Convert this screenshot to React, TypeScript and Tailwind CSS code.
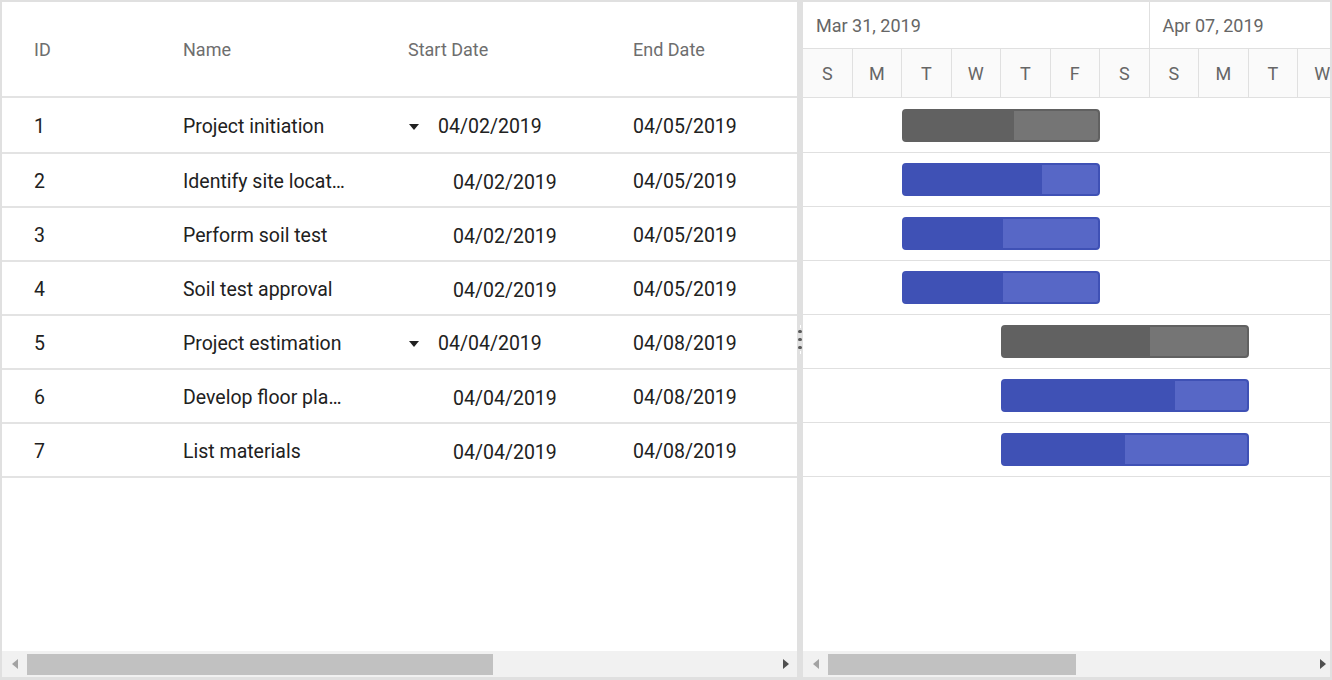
import React from "react";

type Row = {
  id: number;
  name: string;
  start: string;
  end: string;
  parent: boolean;
  offset: number;
  width: number;
  prog: number;
};

const rows: Row[] = [
  { id: 1, name: "Project initiation", start: "04/02/2019", end: "04/05/2019", parent: true, offset: 99, width: 198, prog: 112 },
  { id: 2, name: "Identify site location", start: "04/02/2019", end: "04/05/2019", parent: false, offset: 99, width: 198, prog: 140 },
  { id: 3, name: "Perform soil test", start: "04/02/2019", end: "04/05/2019", parent: false, offset: 99, width: 198, prog: 101 },
  { id: 4, name: "Soil test approval", start: "04/02/2019", end: "04/05/2019", parent: false, offset: 99, width: 198, prog: 101 },
  { id: 5, name: "Project estimation", start: "04/04/2019", end: "04/08/2019", parent: true, offset: 198, width: 247.5, prog: 149 },
  { id: 6, name: "Develop floor plan for estimation", start: "04/04/2019", end: "04/08/2019", parent: false, offset: 198, width: 247.5, prog: 174 },
  { id: 7, name: "List materials", start: "04/04/2019", end: "04/08/2019", parent: false, offset: 198, width: 247.5, prog: 124 },
];

const days = ["S", "M", "T", "W", "T", "F", "S", "S", "M", "T", "W", "T"];

function LeftTri({ dark }: { dark?: boolean }) {
  return (
    <div
      className={
        "w-0 h-0 border-y-[5.5px] border-y-transparent border-r-[6px] " +
        (dark ? "border-r-[#505050]" : "border-r-[#a3a3a3]")
      }
    />
  );
}
function RightTri({ dark }: { dark?: boolean }) {
  return (
    <div
      className={
        "w-0 h-0 border-y-[5.5px] border-y-transparent border-l-[6px] " +
        (dark ? "border-l-[#505050]" : "border-l-[#a3a3a3]")
      }
    />
  );
}

export default function App() {
  return (
    <div
      className="w-[1332px] h-[680px] bg-white border-t-2 border-x-2 border-b-[3px] border-[#e0e0e0] flex overflow-hidden"
      style={{ fontFamily: "Roboto, 'Liberation Sans', sans-serif" }}
    >
      {/* Grid pane */}
      <div className="w-[795px] h-full flex flex-col overflow-hidden shrink-0">
        <div className="h-[96px] border-b-2 border-[#e3e3e3] flex items-center text-[18px] font-normal text-[#6e6e6e] shrink-0">
          <div className="w-[148px] pl-[32px] shrink-0">ID</div>
          <div className="w-[225px] pl-[33px] shrink-0">Name</div>
          <div className="w-[225px] pl-[33px] shrink-0">Start Date</div>
          <div className="w-[225px] pl-[33px] shrink-0">End Date</div>
        </div>
        {rows.map((r, i) => (
          <div
            key={r.id}
            className={
              "border-b-2 border-[#e3e3e3] flex items-center pt-[4px] text-[19.5px] text-[#212121] shrink-0 " +
              (i === 0 ? "h-[56px]" : "h-[54px]")
            }
          >
            <div className="w-[148px] pl-[32px] shrink-0">{r.id}</div>
            <div className="w-[225px] pl-[33px] pr-[27px] shrink-0 truncate">{r.name}</div>
            <div className="w-[225px] pl-[33px] shrink-0 flex items-center">
              {r.parent ? (
                <div className="w-[30px] flex items-center shrink-0">
                  <div className="ml-[1px] w-0 h-0 border-x-[5.5px] border-x-transparent border-t-[6.5px] border-t-[#212121]" />
                </div>
              ) : (
                <div className="w-[45px] shrink-0" />
              )}
              <span className={r.parent ? "" : "mt-[1px]"}>{r.start}</span>
            </div>
            <div className="w-[225px] pl-[33px] shrink-0">{r.end}</div>
          </div>
        ))}
        <div className="flex-1" />
        <div className="h-[26px] bg-[#f1f1f1] flex items-center shrink-0">
          <div className="w-[25px] flex justify-center">
            <LeftTri />
          </div>
          <div className="w-[466px] h-[21px] bg-[#c1c1c1]" />
          <div className="flex-1" />
          <div className="w-[22px] flex justify-center">
            <RightTri dark />
          </div>
        </div>
      </div>

      {/* Splitter */}
      <div className="w-[6px] h-full bg-[#e0e0e0] flex flex-col items-center justify-center shrink-0">
        <div className="w-px h-[3px] bg-white mb-[2px]" />
        <div className="flex flex-col gap-[4.5px]">
          <div className="w-[3.5px] h-[3.5px] rounded-full bg-[#5a5a5a]" />
          <div className="w-[3.5px] h-[3.5px] rounded-full bg-[#5a5a5a]" />
          <div className="w-[3.5px] h-[3.5px] rounded-full bg-[#5a5a5a]" />
        </div>
        <div className="w-px h-[3px] bg-white mt-[2px]" />
      </div>

      {/* Chart pane */}
      <div className="flex-1 h-full flex flex-col overflow-hidden">
        <div className="h-[47px] border-b border-[#e0e0e0] flex shrink-0 text-[18px] text-[#666666]">
          <div className="w-[346.5px] shrink-0 border-r border-[#e0e0e0] pl-[13px] flex items-center">
            Mar 31, 2019
          </div>
          <div className="w-[346.5px] shrink-0 pl-[13px] flex items-center">Apr 07, 2019</div>
        </div>
        <div className="h-[49px] border-b border-[#e0e0e0] flex shrink-0 bg-[#fafafa] text-[18px] text-[#666666]">
          {days.map((d, i) => (
            <div
              key={i}
              className="w-[49.5px] shrink-0 border-r border-[#e0e0e0] flex items-center justify-center"
            >
              {d}
            </div>
          ))}
        </div>
        {rows.map((r, i) => (
          <div
            key={r.id}
            className={
              "border-b border-[#e0e0e0] flex items-center shrink-0 " + (i === 0 ? "h-[55px]" : "h-[54px]")
            }
          >
            <div
              className={
                "h-[33px] rounded-[4px] border-2 flex overflow-hidden shrink-0 " +
                (r.parent ? "border-[#616161] bg-[#757575]" : "border-[#3f51b5] bg-[#5767c6]")
              }
              style={{ marginLeft: r.offset, width: r.width }}
            >
              <div
                className={r.parent ? "bg-[#616161] h-full" : "bg-[#3f51b5] h-full"}
                style={{ width: r.prog - 2 }}
              />
            </div>
          </div>
        ))}
        <div className="flex-1" />
        <div className="h-[26px] bg-[#f1f1f1] flex items-center shrink-0">
          <div className="w-[25px] flex justify-center">
            <LeftTri />
          </div>
          <div className="w-[248px] h-[21px] bg-[#c1c1c1]" />
          <div className="flex-1" />
          <div className="w-[14px] flex justify-center">
            <RightTri dark />
          </div>
        </div>
      </div>
    </div>
  );
}
